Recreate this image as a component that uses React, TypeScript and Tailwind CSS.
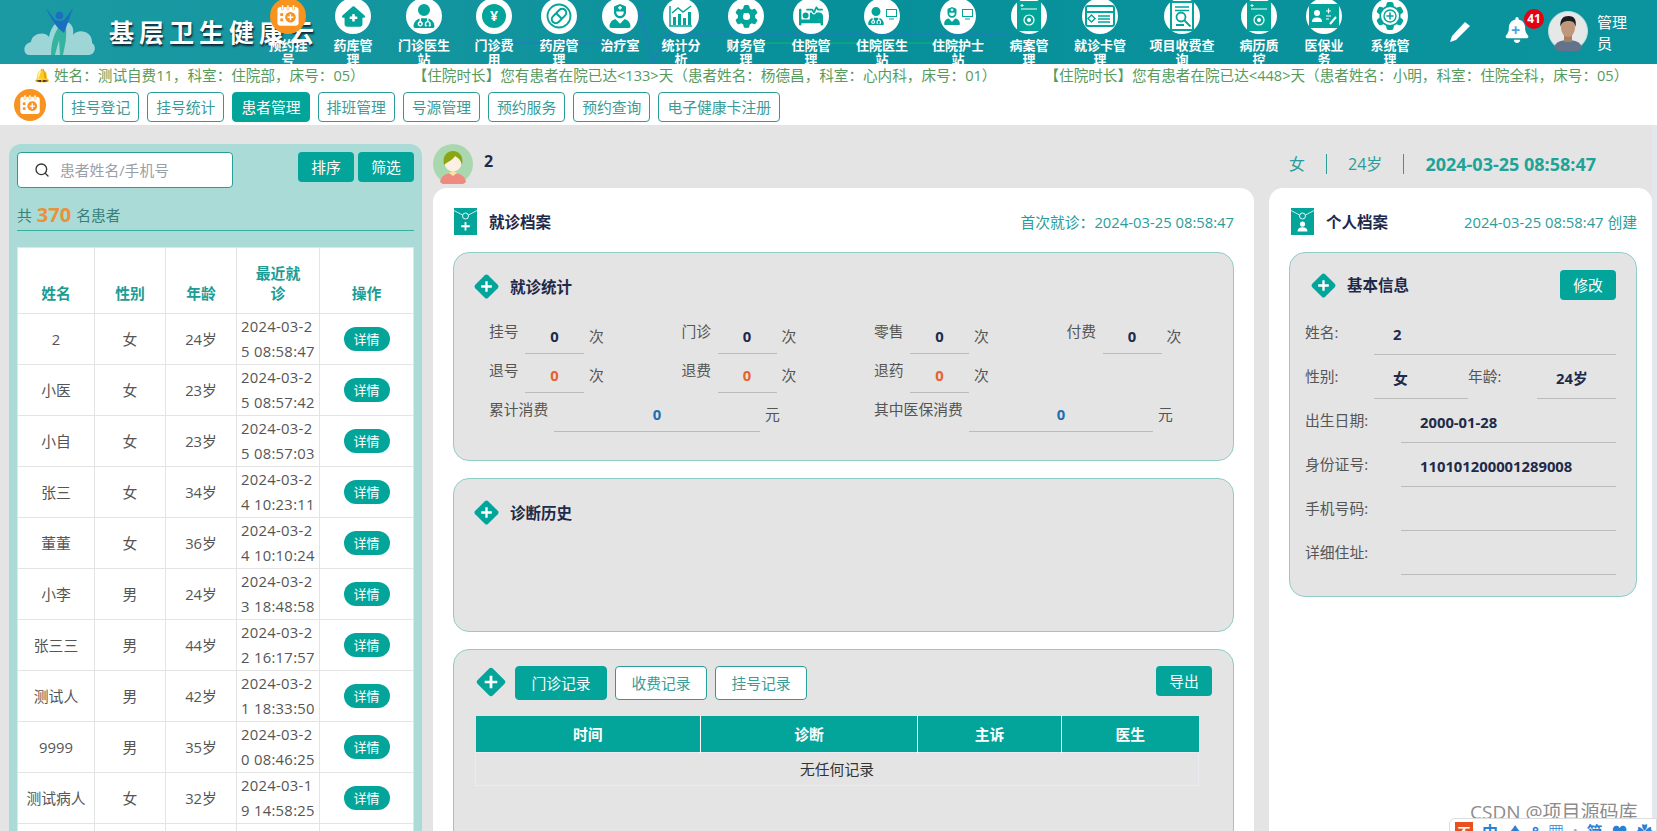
import React from 'react';
import { Search } from 'lucide-react';
import {
  FaHouseMedical,
  FaUserDoctor,
  FaCapsules,
  FaUserNurse,
  FaChartColumn,
  FaGear,
  FaBedPulse,
  FaBell,
} from 'react-icons/fa6';

const TEAL = '#03a59b';

const CalendarPlus = ({ size = 26 }: { size?: number }) => (
  <svg width={size} height={size} viewBox="0 0 32 32">
    <rect x="3" y="5" width="26" height="23" rx="4" fill="#fff" />
    <rect x="8" y="2.5" width="2.5" height="6" rx="1" fill="#fff" stroke="#f7931e" strokeWidth="0.6" />
    <rect x="14.7" y="2.5" width="2.5" height="6" rx="1" fill="#fff" stroke="#f7931e" strokeWidth="0.6" />
    <rect x="21.5" y="2.5" width="2.5" height="6" rx="1" fill="#fff" stroke="#f7931e" strokeWidth="0.6" />
    <rect x="6.5" y="12.5" width="3.5" height="3.5" fill="#f7931e" />
    <rect x="6.5" y="19" width="3.5" height="3.5" fill="#f7931e" />
    <circle cx="19" cy="17.5" r="6.5" fill="#f7931e" />
    <path d="M19 13.8v7.4M15.3 17.5h7.4" stroke="#fff" strokeWidth="1.8" />
  </svg>
);

const Diamond = ({ size = 27 }: { size?: number }) => (
  <svg width={size} height={size} viewBox="0 0 28 28" className="shrink-0">
    <rect x="4.5" y="4.5" width="19" height="19" rx="2.5" transform="rotate(45 14 14)" fill={TEAL} />
    <path d="M14 8.5v11M8.5 14h11" stroke="#fff" strokeWidth="2.4" />
  </svg>
);

const ArchiveIcon = ({ person }: { person?: boolean }) => (
  <svg width="23" height="27" viewBox="0 0 23 27" className="shrink-0">
    <rect width="23" height="27" fill={TEAL} />
    <path d="M0 2.5 8.5 7M23 2.5 14.5 7" stroke="#fff" strokeWidth="0.8" />
    <circle cx="11.5" cy="8" r="3" fill="none" stroke="#fff" strokeWidth="0.9" />
    {person ? (
      <path d="M11.5 13.5a2.6 2.6 0 1 1 0 5.2 2.6 2.6 0 0 1 0-5.2ZM6.5 23.5c0-3 2-4.2 5-4.2s5 1.200 5 4.200Z" fill="#fff" />
    ) : (
      <path d="M11.500 14v8.500M7.200 18.250h8.600" stroke="#fff" strokeWidth="1.800" />
    )}
  </svg>
);

const Yen = () => (
  <div className="flex h-[24px] w-[24px] items-center justify-center rounded-full bg-[#03a59b] text-[14px] font-bold text-white">¥</div>
);

const Capsule = () => (
  <svg width="28" height="28" viewBox="0 0 28 28">
    <circle cx="14" cy="14" r="11.500" fill="none" stroke={TEAL} strokeWidth="1.800" />
    <rect x="10" y="5.500" width="8" height="17" rx="4" transform="rotate(45 14 14)" fill="none" stroke={TEAL} strokeWidth="2" />
    <path d="M11.200 11.200l5.600 5.600" stroke={TEAL} strokeWidth="2" />
  </svg>
);

const StatChart = () => (
  <svg width="26" height="24" viewBox="0 0 26 24">
    <path d="M2 2v20h22" fill="none" stroke={TEAL} strokeWidth="1.500" />
    <path d="M5 13h3v8H5zM10 10h3v11h-3zM15 14h3v7h-3zM20 8h3v13h-3z" fill={TEAL} />
    <path d="M4 9l6-5 5 4 8-6" fill="none" stroke={TEAL} strokeWidth="1.500" />
  </svg>
);

const ScreenPerson = ({ nurse }: { nurse?: boolean }) => (
  <div className="relative flex h-[24px] w-[30px] items-center">
    {nurse ? <FaUserNurse size={18} color={TEAL} /> : <FaUserDoctor size={18} color={TEAL} />}
    <svg width="11" height="11" viewBox="0 0 11 11" className="absolute right-0 top-[5px]">
      <rect x="0.500" y="0.500" width="10" height="7" fill="none" stroke={TEAL} />
      <path d="M3 10h5" stroke={TEAL} />
    </svg>
  </div>
);

const RecordBook = () => (
  <svg width="24" height="30" viewBox="0 0 24 30">
    <rect width="24" height="30" rx="1" fill={TEAL} />
    <path d="M4 8h16" stroke="#fff" strokeWidth="1" />
    <path d="M5 3v3M3.500 4.500h3" stroke="#fff" strokeWidth="1" />
    <circle cx="12" cy="19" r="5" fill="none" stroke="#fff" strokeWidth="1.200" />
    <circle cx="12" cy="19" r="2" fill="#fff" />
  </svg>
);

const VisitCard = () => (
  <svg width="30" height="22" viewBox="0 0 30 22">
    <rect x="1" y="1" width="28" height="20" rx="2" fill="none" stroke={TEAL} strokeWidth="2" />
    <path d="M1 7h28" stroke={TEAL} strokeWidth="2" />
    <rect x="4" y="11" width="5" height="5" transform="rotate(45 6.500 13.500)" fill="none" stroke={TEAL} strokeWidth="1.400" />
    <path d="M13 11h12M13 14h12M13 17h12" stroke={TEAL} strokeWidth="1.400" />
  </svg>
);

const FeeQuery = () => (
  <svg width="24" height="30" viewBox="0 0 24 30">
    <rect x="1" y="1" width="22" height="28" fill="none" stroke={TEAL} strokeWidth="2" />
    <path d="M5 6h14M5 9.500h14" stroke={TEAL} strokeWidth="1.600" />
    <circle cx="11" cy="16" r="4.500" fill="none" stroke={TEAL} strokeWidth="1.800" />
    <path d="M14.500 19.500l6 6M6 24h8" stroke={TEAL} strokeWidth="1.800" />
  </svg>
);

const MedicalBoard = () => (
  <svg width="30" height="24" viewBox="0 0 30 24">
    <rect width="30" height="24" rx="1.500" fill={TEAL} />
    <circle cx="8" cy="9" r="3" fill="#fff" />
    <path d="M3 18c0-3.500 2-4.500 5-4.500s5 1 5 4.500Z" fill="#fff" />
    <path d="M17 7h5M19.500 4.500v5M17 12h5M17 15h3" stroke="#fff" strokeWidth="1.200" />
    <path d="M21 20l6-7" stroke="#fff" strokeWidth="2" />
  </svg>
);

const GearPlus = () => (
  <div className="relative flex items-center justify-center">
    <FaGear size={28} color={TEAL} />
    <div className="absolute h-[18px] w-[18px] rounded-full bg-white" />
    <svg width="14" height="14" viewBox="0 0 14 14" className="absolute">
      <circle cx="7" cy="7" r="6" fill="none" stroke={TEAL} strokeWidth="1.400" />
      <path d="M7 3.500v7M3.500 7h7" stroke={TEAL} strokeWidth="1.600" />
    </svg>
  </div>
);

const FinanceGear = () => (
  <div className="relative flex items-center justify-center">
    <FaGear size={23} color={TEAL} />
    <span className="absolute text-[9px] font-bold text-white">¥</span>
  </div>
);

const navItems = [
  { label: '药库管理', cls: 'w-[66px] px-[13px]', icon: <FaHouseMedical size={23} color={TEAL} /> },
  { label: '门诊医生站', cls: 'w-[76px] px-[11.5px]', icon: <FaUserDoctor size={24} color={TEAL} /> },
  { label: '门诊费用', cls: 'w-[64px] px-[12px]', icon: <Yen /> },
  { label: '药房管理', cls: 'w-[66px] px-[13px]', icon: <Capsule /> },
  { label: '治疗室', cls: 'w-[56px] px-[8px]', icon: <FaUserNurse size={24} color={TEAL} /> },
  { label: '统计分析', cls: 'w-[66px] px-[13px]', icon: <StatChart /> },
  { label: '财务管理', cls: 'w-[64px] px-[12px]', icon: <FinanceGear /> },
  { label: '住院管理', cls: 'w-[66px] px-[13px]', icon: <FaBedPulse size={24} color={TEAL} /> },
  { label: '住院医生站', cls: 'w-[76px] px-[11.5px]', icon: <ScreenPerson /> },
  { label: '住院护士站', cls: 'w-[76px] px-[11.5px]', icon: <ScreenPerson nurse /> },
  { label: '病案管理', cls: 'w-[66px] px-[13px]', icon: <RecordBook /> },
  { label: '就诊卡管理', cls: 'w-[76px] px-[11.5px]', icon: <VisitCard /> },
  { label: '项目收费查询', cls: 'w-[88px] px-[11px]', icon: <FeeQuery /> },
  { label: '病历质控', cls: 'w-[66px] px-[13px]', icon: <RecordBook /> },
  { label: '医保业务', cls: 'w-[64px] px-[12px]', icon: <MedicalBoard /> },
  { label: '系统管理', cls: 'w-[68px] px-[14px]', icon: <GearPlus /> },
];

const subTabs = ['挂号登记', '挂号统计', '患者管理', '排班管理', '号源管理', '预约服务', '预约查询', '电子健康卡注册'];

const patients = [
  ['2', '女', '24岁', '2024-03-25 08:58:47'],
  ['小医', '女', '23岁', '2024-03-25 08:57:42'],
  ['小自', '女', '23岁', '2024-03-25 08:57:03'],
  ['张三', '女', '34岁', '2024-03-24 10:23:11'],
  ['董董', '女', '36岁', '2024-03-24 10:10:24'],
  ['小李', '男', '24岁', '2024-03-23 18:48:58'],
  ['张三三', '男', '44岁', '2024-03-22 16:17:57'],
  ['测试人', '男', '42岁', '2024-03-21 18:33:50'],
  ['9999', '男', '35岁', '2024-03-20 08:46:25'],
  ['测试病人', '女', '32岁', '2024-03-19 14:58:25'],
];

const Logo = () => (
  <svg width="72" height="50" viewBox="0 0 72 50" className="shrink-0">
    <path d="M6 50c-6 0-7-11 2-13 1-9 14-11 18-5 2-10 8-19 18-15 6 2 7 8 6 13 5-7 20-4 19 8 5 3 3 12-3 12Z" fill="#9ed6d8" />
    <path d="M28 50c0-12 3-22 9-30l6 3c1 8-1 18-3 27h-3l-1-15-4 15Z" fill="#35b3a1" />
    <path d="M23 3l9 12c3 1 7 1 9 0l9-12-6 17-3 8-6-5c-4-5-9-13-12-20Z" fill="#1a6fc0" />
    <circle cx="36.500" cy="10.500" r="3.800" fill="#1a6fc0" />
  </svg>
);

const Stat = ({ label, color = 'text-[#1e2a4a]' }: { label: string; color?: string }) => (
  <div className="flex h-[39px]">
    <span className="w-[36px] pt-[6px] text-[#555]">{label}</span>
    <span className={`ml-[0px] h-[39px] w-[59px] border-b border-[#bbb] pt-[11px] text-center font-bold ${color}`}>0</span>
    <span className="ml-[5px] pt-[11px] text-[#555]">次</span>
  </div>
);

const Field = ({ label, value, labelCls, valueCls }: { label: string; value?: string; labelCls: string; valueCls: string }) => (
  <div className="flex h-[44px]">
    <span className={`${labelCls} pt-[11px] text-[#555]`}>{label}</span>
    <span className={`${valueCls} border-b border-[#bbb] pl-[19px] pt-[13px] font-bold text-[#1e2a4a]`}>{value}</span>
  </div>
);

const App = () => {
  return (
    <div className="relative h-[831px] w-[1657px] overflow-hidden bg-[#e4e4e4] font-['Open_Sans','Noto_Sans_CJK_SC',sans-serif] text-[14.8px] leading-[20px]">
      {/* Header */}
      <header className="relative flex h-[64px] overflow-hidden bg-gradient-to-r from-[#1b9aa3] via-[#07909a] to-[#0b949d]">
        <svg width="620" height="64" viewBox="0 0 620 64" className="absolute left-[510px] top-0">
          <path d="M0 43h110l20-30 13 49 16-28h340" fill="none" stroke="#2b77c9" strokeWidth="1.200" />
          <path d="M230 43h220" fill="none" stroke="#13b56f" strokeWidth="1.200" />
        </svg>
        <div className="ml-[23px] mt-[5px] w-[86px] shrink-0">
          <Logo />
        </div>
        <div className="mt-[14px] w-[147px] shrink-0 whitespace-nowrap text-[25px] font-bold leading-[36px] tracking-[5px] text-white [text-shadow:1px_2px_2px_#123]">
          基层卫生健康云
        </div>
        <nav className="relative flex">
          <div className="flex w-[64px] flex-col items-center px-[12px]">
            <div className="-mt-[2px] flex h-[36px] w-[36px] shrink-0 items-center justify-center rounded-full bg-[#f7931e]">
              <CalendarPlus />
            </div>
            <span className="mt-[4px] text-center text-[13px] font-bold leading-[14px] text-white">预约挂号</span>
          </div>
          {navItems.map((item) => (
            <div key={item.label} className={`flex flex-col items-center ${item.cls}`}>
              <div className="-mt-[2px] flex h-[36px] w-[36px] shrink-0 items-center justify-center rounded-full bg-white">
                {item.icon}
              </div>
              <span className="mt-[4px] text-center text-[13px] font-bold leading-[14px] text-white">{item.label}</span>
            </div>
          ))}
        </nav>
        <div className="relative flex items-start">
          <svg width="22" height="22" viewBox="0 0 22 22" className="ml-[25px] mt-[21px] shrink-0">
            <path d="M16 1l5 4L7 19l-6 2 2-6Z" fill="#fff" />
          </svg>
          <div className="relative ml-[33px] mt-[17px]">
            <FaBell size={26} color="#fff" />
            <span className="absolute left-[7px] top-[3px] text-[16px] font-bold leading-[20px] text-[#4aa3df]">+</span>
            <span className="absolute -right-[14px] -top-[8px] flex h-[20px] w-[20px] items-center justify-center rounded-full bg-[#e60012] text-[12px] font-bold text-white">41</span>
          </div>
          <svg width="40" height="40" viewBox="0 0 40 40" className="ml-[18px] mt-[11px] shrink-0">
            <circle cx="20" cy="20" r="19.500" fill="#e6e8e8" stroke="#b6dfe0" />
            <path d="M6 37c1-6 7-8 14-8s13 2 14 8a19.500 19.500 0 0 1-28 0Z" fill="#63738c" />
            <rect x="16" y="23" width="8" height="8" fill="#a97f66" />
            <ellipse cx="20" cy="17" rx="7" ry="9" fill="#c1977b" />
            <path d="M12.500 16c-1-8 3-11 8-11s8.500 3 7 11c-1-4-2-6-7-6s-7 2-8 6Z" fill="#1c1c1e" />
          </svg>
          <div className="ml-[9px] mt-[12px] w-[32px] text-[15px] leading-[21px] text-white">管理员</div>
        </div>
      </header>

      {/* Ticker */}
      <div className="flex h-[22px] overflow-hidden bg-white pr-[12px] text-[14.6px] leading-[22px] text-[#569b5c]">
        <div className="flex w-[1645px] overflow-hidden whitespace-nowrap">
          <span className="ml-[34px] mr-[4px] text-[13px]">🔔</span>
          <span>姓名：测试自费11，科室：住院部，床号：05）</span>
          <span className="ml-[48px]">【住院时长】您有患者在院已达&lt;133&gt;天（患者姓名：杨德昌，科室：心内科，床号：01）</span>
          <span className="ml-[48px]">【住院时长】您有患者在院已达&lt;448&gt;天（患者姓名：小明，科室：住院全科，床号：05）</span>
        </div>
      </div>

      {/* Sub tabs */}
      <div className="flex h-[39px] items-start bg-white pl-[14px]">
        <div className="mt-[3px] flex h-[32px] w-[32px] items-center justify-center rounded-full bg-[#f7931e]">
          <CalendarPlus size={24} />
        </div>
        <div className="ml-[16px] mt-[6px] flex gap-[8px]">
          {subTabs.map((t) => (
            <button
              key={t}
              className={
                t === '患者管理'
                  ? 'h-[30px] rounded-[4px] border border-[#03a59b] bg-[#03a59b] px-[8px] text-white'
                  : 'h-[30px] rounded-[4px] border border-[#2a9d98] bg-white px-[8px] text-[#3a9c98]'
              }
            >
              {t}
            </button>
          ))}
        </div>
      </div>

      <div className="flex">
        {/* Patient list */}
        <aside className="ml-[9px] mt-[19px] h-[700px] w-[413px] shrink-0 rounded-t-[12px] bg-[#aadbd6] px-[8px] pt-[8px]">
          <div className="flex items-start justify-between">
            <div className="flex h-[36px] w-[216px] items-center rounded-[4px] border border-[#2a9d98] bg-white pl-[16px] text-[#9aa0a8]">
              <Search size={16} color="#333" />
              <span className="ml-[10px]">患者姓名/手机号</span>
            </div>
            <div className="flex gap-[4px]">
              <button className="h-[30px] w-[56px] rounded-[4px] bg-[#03a59b] text-white">排序</button>
              <button className="h-[30px] w-[56px] rounded-[4px] bg-[#03a59b] text-white">筛选</button>
            </div>
          </div>
          <div className="mt-[14px] flex h-[29px] items-center border-b border-[#35b0a6] pb-[3px] text-[#38807c]">
            共<span className="mx-[5px] text-[20px] font-bold text-[#e8923a]">370</span>名患者
          </div>
          <table className="mt-[16px] w-[397px] table-fixed border-collapse border border-[#1f9a94] bg-white text-center text-[#555]">
            <thead>
              <tr className="h-[66px] font-bold text-[#1b9c94]">
                <th className="w-[77px] border border-[#e4e4e4] pb-[10px] align-bottom">姓名</th>
                <th className="w-[71px] border border-[#e4e4e4] pb-[10px] align-bottom">性别</th>
                <th className="w-[71px] border border-[#e4e4e4] pb-[10px] align-bottom">年龄</th>
                <th className="w-[83px] border border-[#e4e4e4] px-[12px] pb-[10px] align-bottom">最近就诊</th>
                <th className="border border-[#e4e4e4] pb-[10px] align-bottom">操作</th>
              </tr>
            </thead>
            <tbody>
              {patients.map((p) => (
                <tr key={p[0]} className="h-[51px]">
                  <td className="border border-[#e4e4e4]">{p[0]}</td>
                  <td className="border border-[#e4e4e4]">{p[1]}</td>
                  <td className="border border-[#e4e4e4]">{p[2]}</td>
                  <td className="border border-[#e4e4e4] px-[4px] text-left leading-[25px] tracking-[0.3px] break-all">{p[3]}</td>
                  <td className="border border-[#e4e4e4]">
                    <button className="h-[24px] w-[46px] rounded-full bg-[#03a59b] text-[13px] text-white">详情</button>
                  </td>
                </tr>
              ))}
              <tr className="h-[51px]">
                <td className="border border-[#e4e4e4]" />
                <td className="border border-[#e4e4e4]" />
                <td className="border border-[#e4e4e4]" />
                <td className="border border-[#e4e4e4]" />
                <td className="border border-[#e4e4e4]" />
              </tr>
            </tbody>
          </table>
        </aside>

        <main className="ml-[11px] mt-[19px] w-[1219px] shrink-0">
          {/* Patient summary */}
          <div className="flex h-[44px] items-start">
            <svg width="40" height="40" viewBox="0 0 40 40" className="shrink-0">
              <circle cx="20" cy="20" r="20" fill="#aad8ae" />
              <path d="M7 38c1-6 6-9 13-9s12 3 13 9a20 20 0 0 1-26 0Z" fill="#ef8a80" />
              <path d="M16 29l4 3 4-3-4-2Z" fill="#f7e5a0" />
              <circle cx="20" cy="19" r="8.500" fill="#fdf0e3" />
              <path d="M11 21c-2-9 3-14 9-14s11 5 9 14c-1-4-3-7-7-9-1 3-6 5-11 9Z" fill="#8aa613" />
            </svg>
            <span className="ml-[11px] mt-[7px] text-[16px] font-bold text-[#1e2a4a]">2</span>
            <div className="ml-auto mr-[56px] mt-[8px] flex h-[24px] items-center text-[16px] text-[#2a9d98]">
              <span>女</span>
              <span className="mx-[21px] h-[20px] w-px bg-[#2a9d98]" />
              <span>24岁</span>
              <span className="mx-[21px] h-[20px] w-px bg-[#2a9d98]" />
              <span className="text-[18px] font-bold text-[#1da398]">2024-03-25 08:58:47</span>
            </div>
          </div>

          <div className="flex items-start">
            {/* Visit archive */}
            <section className="h-[700px] w-[821px] shrink-0 rounded-t-[14px] bg-white px-[20px] pt-[20px]">
              <div className="flex h-[27px] items-center pl-[1px]">
                <ArchiveIcon />
                <span className="ml-[12px] text-[15.5px] font-bold text-[#1e2a4a]">就诊档案</span>
                <span className="ml-auto text-[#2a9d98]">首次就诊：2024-03-25 08:58:47</span>
              </div>

              <div className="mt-[17px] h-[209px] rounded-[16px] border border-[#8fcdc9] bg-[#e4e4e4] pl-[19px] pt-[20px]">
                <div className="flex items-center">
                  <Diamond />
                  <span className="ml-[10px] text-[15.5px] font-bold text-[#1e2a4a]">就诊统计</span>
                </div>
                <div className="ml-[16px] mt-[15px] w-[770px]">
                  <div className="grid grid-cols-4">
                    <Stat label="挂号" />
                    <Stat label="门诊" />
                    <Stat label="零售" />
                    <Stat label="付费" />
                  </div>
                  <div className="grid grid-cols-4">
                    <Stat label="退号" color="text-[#e8622c]" />
                    <Stat label="退费" color="text-[#e8622c]" />
                    <Stat label="退药" color="text-[#e8622c]" />
                  </div>
                  <div className="grid grid-cols-2">
                    <div className="flex h-[39px]">
                      <span className="w-[65px] pt-[6px] text-[#555]">累计消费</span>
                      <span className="h-[39px] w-[206px] border-b border-[#bbb] pt-[11px] text-center font-bold text-[#1d6fb0]">0</span>
                      <span className="ml-[5px] pt-[11px] text-[#555]">元</span>
                    </div>
                    <div className="flex h-[39px]">
                      <span className="w-[95px] pt-[6px] text-[#555]">其中医保消费</span>
                      <span className="h-[39px] w-[184px] border-b border-[#bbb] pt-[11px] text-center font-bold text-[#1d6fb0]">0</span>
                      <span className="ml-[5px] pt-[11px] text-[#555]">元</span>
                    </div>
                  </div>
                </div>
              </div>

              <div className="mt-[17px] h-[154px] rounded-[16px] border border-[#8fcdc9] bg-[#e4e4e4] pl-[19px] pt-[20px]">
                <div className="flex items-center">
                  <Diamond />
                  <span className="ml-[10px] text-[15.5px] font-bold text-[#1e2a4a]">诊断历史</span>
                </div>
              </div>

              <div className="mt-[17px] h-[300px] rounded-[16px] border border-[#8fcdc9] bg-[#e4e4e4] px-[21px] pt-[16px]">
                <div className="flex items-start">
                  <Diamond size={32} />
                  <button className="ml-[8px] h-[34px] w-[92px] rounded-[4px] border border-[#03a59b] bg-[#03a59b] text-white">门诊记录</button>
                  <button className="ml-[8px] h-[34px] w-[92px] rounded-[4px] border border-[#2a9d98] bg-white text-[#3a9c98]">收费记录</button>
                  <button className="ml-[8px] h-[34px] w-[92px] rounded-[4px] border border-[#2a9d98] bg-white text-[#3a9c98]">挂号记录</button>
                  <button className="ml-auto h-[30px] w-[56px] rounded-[4px] bg-[#03a59b] text-white">导出</button>
                </div>
                <table className="mt-[16px] w-[724px] table-fixed border-collapse text-center">
                  <thead>
                    <tr className="h-[36px] bg-[#03a59b] font-bold text-white">
                      <th className="w-[225px] border-r border-white">时间</th>
                      <th className="w-[217px] border-r border-white">诊断</th>
                      <th className="w-[144px] border-r border-white">主诉</th>
                      <th>医生</th>
                    </tr>
                  </thead>
                  <tbody>
                    <tr className="h-[33px]">
                      <td colSpan={4} className="border border-[#e8ebf0] text-[#333]">无任何记录</td>
                    </tr>
                  </tbody>
                </table>
              </div>
            </section>

            {/* Personal archive */}
            <section className="ml-[15px] h-[700px] w-[383px] shrink-0 rounded-t-[14px] bg-white pl-[20px] pr-[15px] pt-[20px]">
              <div className="flex h-[27px] items-center pl-[2px]">
                <ArchiveIcon person />
                <span className="ml-[12px] text-[15.5px] font-bold text-[#1e2a4a]">个人档案</span>
                <span className="ml-auto text-[#2a9d98]">2024-03-25 08:58:47 创建</span>
              </div>
              <div className="mt-[17px] h-[345px] rounded-[16px] border border-[#8fcdc9] bg-[#e4e4e4] pl-[15px] pr-[20px] pt-[17px]">
                <div className="flex h-[30px] items-center pl-[5px]">
                  <Diamond />
                  <span className="ml-[10px] text-[15.5px] font-bold text-[#1e2a4a]">基本信息</span>
                  <button className="ml-auto h-[30px] w-[56px] rounded-[4px] bg-[#03a59b] text-white">修改</button>
                </div>
                <div className="mt-[11px]">
                  <Field label="姓名:" value="2" labelCls="w-[69px]" valueCls="w-[242px]" />
                  <div className="flex">
                    <Field label="性别:" value="女" labelCls="w-[69px]" valueCls="w-[94px]" />
                    <Field label="年龄:" value="24岁" labelCls="w-[69px]" valueCls="w-[79px]" />
                  </div>
                  <Field label="出生日期:" value="2000-01-28" labelCls="w-[96px]" valueCls="w-[215px]" />
                  <Field label="身份证号:" value="110101200001289008" labelCls="w-[96px]" valueCls="w-[215px]" />
                  <Field label="手机号码:" labelCls="w-[96px]" valueCls="w-[215px]" />
                  <Field label="详细住址:" labelCls="w-[96px]" valueCls="w-[215px]" />
                </div>
              </div>
            </section>
          </div>
        </main>
        <div className="ml-auto h-[706px] w-[5px] bg-[#e3e7ee]" />
      </div>

      {/* Watermark and browser input bar over the page */}
      <div className="absolute left-[1470px] top-[800px] whitespace-nowrap text-[19px] leading-[24px] text-[#8c8c8c]">CSDN @项目源码库</div>
      <div className="absolute left-[1449px] top-[818px] flex h-[30px] w-[208px] items-start gap-[9px] rounded-tl-[6px] border border-[#ddd] bg-white pl-[5px] pt-[3px] text-[16px] font-bold text-[#2b7fd4]">
        <span className="flex h-[20px] w-[18px] items-center justify-center bg-[#e8501f] text-[13px] text-white">不</span>
        <span>中</span>
        <span>♦</span>
        <span>°</span>
        <span>▦</span>
        <span className="text-[#aaa]">:</span>
        <span>简</span>
        <span>♥</span>
        <span>✿</span>
      </div>
    </div>
  );
};

export default App;
